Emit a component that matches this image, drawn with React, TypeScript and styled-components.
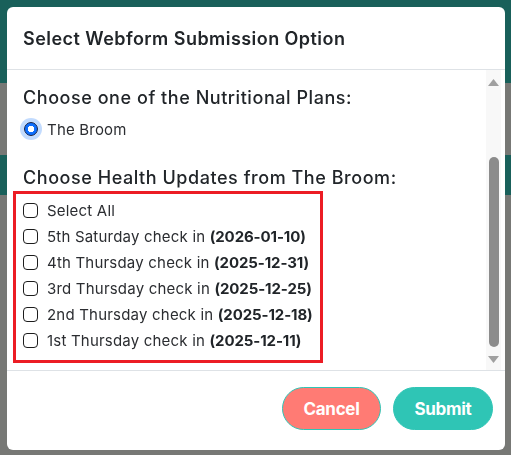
import styled, {createGlobalStyle} from 'styled-components';

const GlobalStyle = createGlobalStyle`
  html, body {
    margin: 0;
    padding: 0;
    background: #777875;
  }
  body {
    font-family: Inter, "Noto Sans", sans-serif;
    color: #212529;
  }
`;

type Update = {label: string; date: string};

const updates: Update[] = [
  {label: '5th Saturday check in', date: '2026-01-10'},
  {label: '4th Thursday check in', date: '2025-12-31'},
  {label: '3rd Thursday check in', date: '2025-12-25'},
  {label: '2nd Thursday check in', date: '2025-12-18'},
  {label: '1st Thursday check in', date: '2025-12-11'},
];

const Page = styled.div`
  height: 455px;
  display: flex;
  flex-direction: column;
`;

const Band = styled.div<{$h: number; $teal?: boolean}>`
  height: ${(p) => p.$h}px;
  flex: ${(p) => (p.$h ? 'none' : '1')};
  background: ${(p) => (p.$teal ? '#19605a' : '#777875')};
`;

const Modal = styled.div`
  position: fixed;
  top: 7px;
  left: 7px;
  width: 498px;
  height: 443px;
  background: #fff;
  border-radius: 6px;
  display: flex;
  flex-direction: column;
  overflow: hidden;
`;

const Header = styled.div`
  height: 62px;
  flex: none;
  display: flex;
  align-items: center;
  padding: 0 16px;
  border-bottom: 1px solid #dee2e6;
`;

const Title = styled.h5`
  margin: 0;
  font-size: 18px;
  font-weight: 600;
  line-height: 22px;
  letter-spacing: 0.45px;
  padding-top: 1px;
`;

const Body = styled.div`
  height: 300px;
  flex: none;
  display: flex;
  border-bottom: 1px solid #dee2e6;
`;

const Content = styled.div`
  flex: 1;
  padding: 17px 0 0 16px;
  display: flex;
  flex-direction: column;
`;

const SectionLabel = styled.div<{$gap?: number}>`
  font-size: 18px;
  font-weight: 500;
  line-height: 22px;
  letter-spacing: 0.55px;
  margin-top: ${(p) => p.$gap ?? 0}px;
`;

const OptionRow = styled.label<{$h: number}>`
  display: flex;
  align-items: center;
  height: ${(p) => p.$h}px;
  gap: 9px;
  font-size: 15px;
  line-height: 1;
  letter-spacing: 0.2px;
  color: #2b2d31;

  b {
    font-weight: 700;
    letter-spacing: -0.1px;
    color: #212529;
  }
`;

const Radio = styled.span`
  width: 14px;
  height: 14px;
  margin-left: 1px;
  box-sizing: border-box;
  border-radius: 50%;
  border: 1.5px solid #10204a;
  background: radial-gradient(circle, #fff 0 3px, #0d6efd 3.5px);
  box-shadow: 0 0 0 4px rgba(13, 110, 253, 0.25);
`;

const Checkbox = styled.span`
  width: 15px;
  height: 15px;
  box-sizing: border-box;
  border: 1px solid #1c1c1c;
  border-radius: 4px;
  background: #fff;
`;

const Highlight = styled.div`
  margin: 2px 0 0 -10px;
  width: 310px;
  box-sizing: border-box;
  border: 3px solid #ec1c24;
  padding: 3px 0 7px 7px;
`;

const Scrollbar = styled.div`
  width: 15px;
  margin-right: 4px;
  background: #f8f8f8;
  display: flex;
  flex-direction: column;
  align-items: center;
`;

const Arrow = styled.svg`
  flex: none;
  display: block;
`;

const Thumb = styled.div`
  width: 10px;
  height: 190px;
  margin-top: 70px;
  border-radius: 5px;
  background: #8c8c8c;
`;

const Footer = styled.div`
  flex: 1;
  display: flex;
  justify-content: flex-end;
  align-items: flex-start;
  gap: 12px;
  padding: 16px 12px 0;
`;

const PillButton = styled.button<{$tone: 'cancel' | 'submit'}>`
  height: 43px;
  width: ${(p) => (p.$tone === 'cancel' ? 99 : 100)}px;
  border-radius: 22px;
  border: 1px solid #2fc5b5;
  background: ${(p) => (p.$tone === 'cancel' ? '#ff7b74' : '#2fc5b5')};
  color: #fff;
  font-family: Inter, "Noto Sans", sans-serif;
  font-size: 17px;
  font-weight: 700;
  letter-spacing: -0.3px;
  padding: 0;
`;

export default function App() {
  return (
    <>
      <GlobalStyle />
      <Page>
        <Band $h={83} $teal />
        <Band $h={72} />
        <Band $h={40} $teal />
        <Band $h={0} />
      </Page>
      <Modal>
        <Header>
          <Title>Select Webform Submission Option</Title>
        </Header>
        <Body>
          <Content>
            <SectionLabel>Choose one of the Nutritional Plans:</SectionLabel>
            <OptionRow $h={24} style={{marginTop: 8}}>
              <Radio />
              The Broom
            </OptionRow>
            <SectionLabel $gap={26}>Choose Health Updates from The Broom:</SectionLabel>
            <Highlight>
              <OptionRow $h={26}>
                <Checkbox />
                Select All
              </OptionRow>
              {updates.map((u) => (
                <OptionRow $h={26} key={u.date}>
                  <Checkbox />
                  <span>
                    {u.label} <b>({u.date})</b>
                  </span>
                </OptionRow>
              ))}
            </Highlight>
          </Content>
          <Scrollbar>
            <Arrow width="13" height="9" viewBox="0 0 13 9" style={{marginTop: 8}}>
              <path d="M6.5 1 L12 8 L1 8 Z" fill="#a0a0a0" />
            </Arrow>
            <Thumb />
            <Arrow width="13" height="9" viewBox="0 0 13 9" style={{marginTop: 8}}>
              <path d="M1 1 L12 1 L6.5 8 Z" fill="#a0a0a0" />
            </Arrow>
          </Scrollbar>
        </Body>
        <Footer>
          <PillButton $tone="cancel">Cancel</PillButton>
          <PillButton $tone="submit">Submit</PillButton>
        </Footer>
      </Modal>
    </>
  );
}
